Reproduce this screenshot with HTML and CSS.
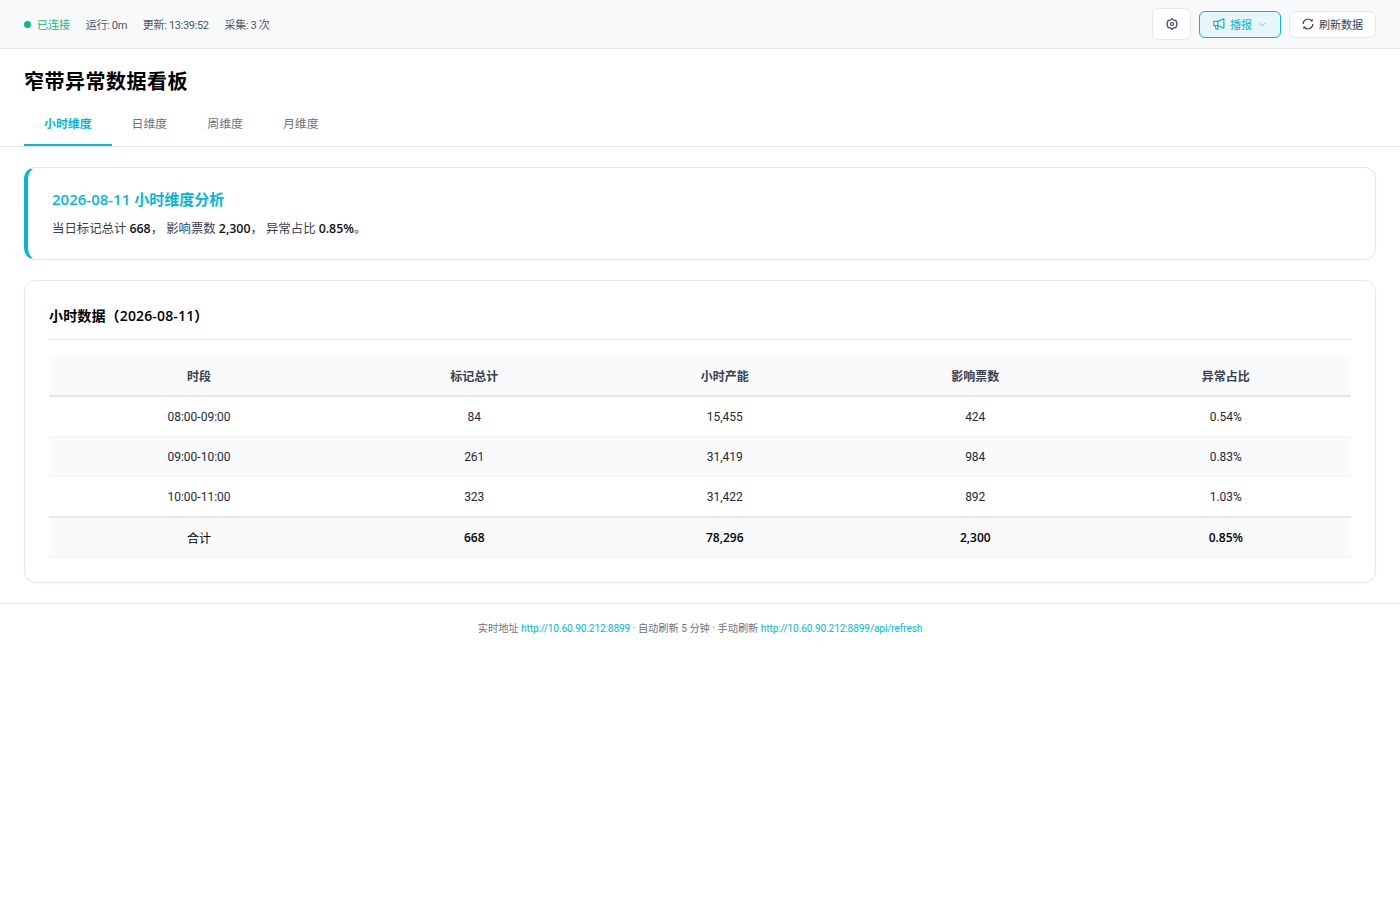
FILE: index.html

```html
<!DOCTYPE html>
<html lang="en">
<head>
  <meta charset="UTF-8">
  <title>窄带异常数据看板</title>
  <link rel="stylesheet" href="styles.css">
</head>
<body>

<!-- Top bar -->
<div class="topbar">
  <div class="status">
    <span class="status-on"><i class="dot"></i>已连接</span>
    <span>运行: 0m</span>
    <span>更新: 13:39:52</span>
    <span>采集: 3 次</span>
  </div>
  <div class="actions">
    <button class="btn btn-icon">
      <svg width="12" height="12" viewBox="0 0 16 16" fill="none" stroke="#33415c" stroke-width="1.6" stroke-linejoin="round"><path d="M8 .9l2 1.900 3.300.4.600 3L15 8l-1.100 1.800-.6 3-3.300.4-2 1.900-2-1.900-3.300-.4-.6-3L1 8l1.100-1.800.6-3 3.300-.4z"/><circle cx="8" cy="8" r="2"/></svg>
    </button>
    <button class="btn btn-notify">
      <svg width="12" height="12" viewBox="0 0 16 16" fill="none" stroke="#06b6d4" stroke-width="1.5" stroke-linejoin="round"><path d="M1 4.500h5.500L14.500 1v12.500L6.500 10H1z"/><path d="M6.500 4.500V10M3 10l1 5h2.500L6 10.500"/></svg>
      <span>播报</span>
      <svg class="chev" width="7" height="7" viewBox="0 0 10 10" fill="none" stroke="#5cc9de" stroke-width="1.4"><path d="M1 3l4 4 4-4"/></svg>
    </button>
    <button class="btn btn-refresh">
      <svg width="12" height="12" viewBox="0 0 16 16" fill="none" stroke="#33415c" stroke-width="1.5"><path d="M14.500 8a6.500 6.500 0 0 1-11.300 4.400M1.500 8a6.500 6.500 0 0 1 11.300-4.400"/><path d="M13.500 1.600v2.400h-2.400M2.500 14.400V12h2.400"/></svg>
      <span>刷新数据</span>
    </button>
  </div>
</div>

<!-- Header -->
<div class="header">
  <h1>窄带异常数据看板</h1>
  <div class="tabs">
    <a class="tab active">小时维度</a>
    <a class="tab">日维度</a>
    <a class="tab">周维度</a>
    <a class="tab">月维度</a>
  </div>
</div>

<div class="content">
  <div class="card summary">
    <h2>2026-08-11 小时维度分析</h2>
    <p>当日标记总计 <b>668</b>， 影响票数 <b>2,300</b>， 异常占比 <b>0.85%</b>。</p>
  </div>

  <div class="card">
    <h3>小时数据（2026-08-11）</h3>
    <table class="data-table">
      <colgroup>
        <col class="col-first">
        <col><col><col><col>
      </colgroup>
      <thead>
        <tr><th>时段</th><th>标记总计</th><th>小时产能</th><th>影响票数</th><th>异常占比</th></tr>
      </thead>
      <tbody>
        <tr><td>08:00-09:00</td><td>84</td><td>15,455</td><td>424</td><td>0.54%</td></tr>
        <tr><td>09:00-10:00</td><td>261</td><td>31,419</td><td>984</td><td>0.83%</td></tr>
        <tr><td>10:00-11:00</td><td>323</td><td>31,422</td><td>892</td><td>1.03%</td></tr>
        <tr class="total"><td>合计</td><td><b>668</b></td><td><b>78,296</b></td><td><b>2,300</b></td><td><b>0.85%</b></td></tr>
      </tbody>
    </table>
  </div>
</div>

<div class="footer">
  实时地址 <a>http://10.60.90.212:8899</a> · 自动刷新 5 分钟 · 手动刷新 <a>http://10.60.90.212:8899/api/refresh</a>
</div>

</body>
</html>
```

FILE: styles.css

```css
html, body {
  margin: 0;
  padding: 0;
  background: #fff;
  color: #111;
  font-family: Roboto, "Noto Sans CJK SC", sans-serif;
}

b, h1, h2, h3 {
  font-family: "Open Sans", "Noto Sans CJK SC", sans-serif;
}

.topbar {
  display: flex;
  justify-content: space-between;
  align-items: center;
  height: 48px;
  padding: 0 24px;
  background: #f8f9fb;
  border-bottom: 1px solid #e5e7eb;
}

.status {
  display: flex;
  align-items: center;
  gap: 15.800px;
  font-size: 11px;
  letter-spacing: -0.33px;
  color: #4b5563;
}

.status-on {
  display: flex;
  align-items: center;
  gap: 6px;
  letter-spacing: 0;
  color: #10b981;
}

.dot {
  width: 7px;
  height: 7px;
  border-radius: 50%;
  background: #10b981;
}

.actions {
  display: flex;
  align-items: center;
  gap: 8px;
}

.btn {
  display: flex;
  align-items: center;
  justify-content: center;
  gap: 5px;
  height: 27px;
  padding: 0;
  border: 1px solid #e5e7eb;
  border-radius: 6px;
  background: #fff;
  color: #374151;
  font-family: inherit;
  font-size: 11px;
}

.btn-icon {
  width: 39px;
  height: 32px;
}

.btn-notify {
  width: 82px;
  justify-content: flex-start;
  padding-left: 13px;
  border-color: #06b6d4;
  background: #e6f6fb;
  color: #06b6d4;
}

.chev {
  margin-left: 1.500px;
}

.btn-refresh {
  width: 87px;
}

.header {
  border-bottom: 1px solid #e5e7eb;
  padding: 20px 24px 0;
}

h1 {
  margin: 0 0 11px;
  font-size: 20px;
  letter-spacing: 0.5px;
  line-height: 26px;
  font-weight: 700;
  color: #000;
}

.tabs {
  display: flex;
}

.tab {
  padding: 0 20px;
  height: 40px;
  line-height: 37px;
  font-size: 11.900px;
  color: #6b7280;
  box-sizing: border-box;
}

.tab.active {
  color: #06b6d4;
  font-weight: 600;
  border-bottom: 2px solid #06b6d4;
}

.content {
  padding: 20px 24px;
  display: flex;
  flex-direction: column;
  gap: 20px;
  border-bottom: 1px solid #e5e7eb;
}

.card {
  background: #fff;
  border: 1px solid #e5e7eb;
  border-radius: 12px;
  padding: 24px;
  box-shadow: 0 1px 2px rgba(0, 0, 0, 0.04);
}

.summary {
  border-left: 4px solid #06b6d4;
  padding: 20px 24px 20px;
}

.summary h2 {
  margin: 0 0 8px;
  font-size: 15px;
  line-height: 22px;
  font-weight: 600;
  color: #06b6d4;
}

.summary p {
  margin: 0;
  font-size: 12.400px;
  line-height: 21px;
  color: #374151;
}

.summary b {
  color: #111;
  font-weight: 600;
}

.card h3 {
  margin: 0 0 16px;
  padding-bottom: 12px;
  border-bottom: 1px solid #e5e7eb;
  font-size: 14px;
  letter-spacing: 0.15px;
  line-height: 22px;
  font-weight: 600;
  color: #000;
}

.data-table {
  width: 100%;
  border-collapse: collapse;
  table-layout: fixed;
  font-size: 12px;
}

.col-first {
  width: 300px;
}

.data-table th {
  height: 39px;
  padding: 0;
  background: #f9fafb;
  border-bottom: 2px solid #e5e7eb;
  font-weight: 600;
  color: #374151;
}

.data-table td {
  height: 39px;
  padding: 0;
  text-align: center;
  border-bottom: 1px solid #f3f4f6;
  color: #1f2937;
}

.data-table tbody tr:nth-child(2) td {
  background: #f9fafb;
}

.data-table .total td {
  height: 39px;
  background: #f9fafb;
  border-top: 2px solid #e5e7eb;
  color: #000;
}

.data-table b {
  font-weight: 600;
}

.footer {
  padding: 17px 24px 16px;
  text-align: center;
  font-size: 10.200px;
  line-height: 16px;
  color: #6b7280;
}

.footer a {
  letter-spacing: -0.15px;
  color: #06b6d4;
}
```
